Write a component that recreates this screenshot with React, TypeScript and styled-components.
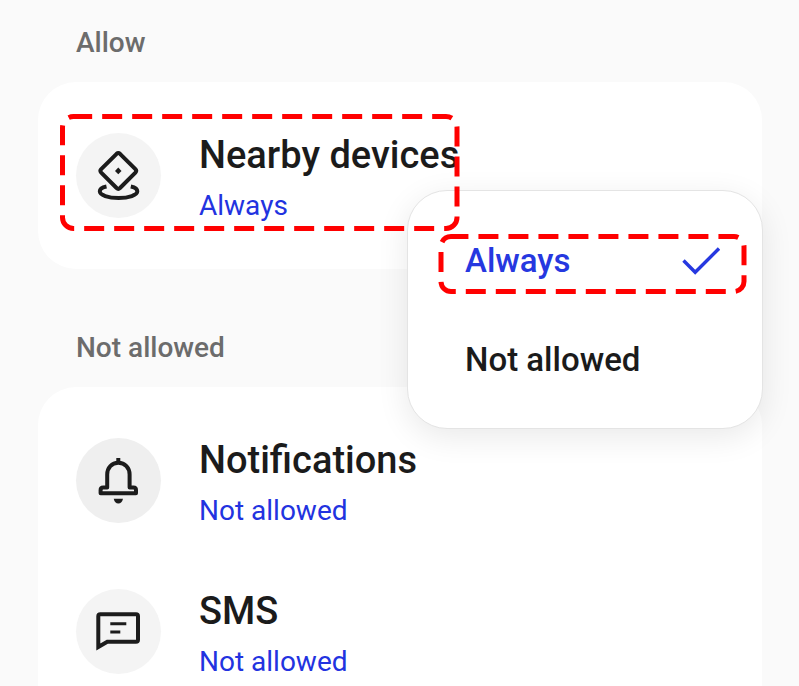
import React from "react";
import styled, { createGlobalStyle } from "styled-components";

const GlobalStyle = createGlobalStyle`
  *, *::before, *::after { box-sizing: border-box; }
  body {
    margin: 0;
    background: #fafafa;
    color: #1b1b1b;
    font-family: Roboto, "Liberation Sans", sans-serif;
  }
`;

const Screen = styled.main`
  height: 100vh;
  overflow: hidden;
  padding: 0 37px 0 38px;
`;

const Section = styled.section<{ $first?: boolean }>`
  padding-top: ${(p) => (p.$first ? 27 : 63)}px;
`;

const SectionTitle = styled.h2`
  margin: 0 0 23px;
  padding-left: 38px;
  font-size: 28px;
  line-height: 32px;
  font-weight: 500;
  color: #6c6c6c;
`;

const Card = styled.div`
  position: relative;
  padding: 18px 0;
  border-radius: 38px;
  background: #fff;
`;

const Row = styled.button`
  display: flex;
  align-items: center;
  gap: 38px;
  width: 100%;
  height: 151px;
  padding: 0 38px;
  border: 0;
  background: none;
  color: inherit;
  font: inherit;
  text-align: left;
  cursor: pointer;
`;

const IconCircle = styled.span<{ $strong?: boolean }>`
  display: grid;
  place-items: center;
  flex: none;
  width: 85px;
  height: 85px;
  border-radius: 50%;
  background: ${(p) => (p.$strong ? "#efefef" : "#f4f4f4")};
`;

const RowText = styled.span`
  display: flex;
  flex-direction: column;
  gap: 12px;
  padding-top: 2px;
  white-space: nowrap;
`;

const RowTitle = styled.span`
  font-size: 38px;
  line-height: 46px;
  font-weight: 500;
`;

const RowStatus = styled.span`
  font-size: 28px;
  line-height: 32px;
  color: #2233e0;
`;

const Menu = styled.div`
  position: absolute;
  z-index: 1;
  top: 108px;
  right: -1px;
  width: 356px;
  padding: 20px 0 19px;
  border: 1px solid #e4e4e4;
  border-radius: 40px;
  background: #fff;
  box-shadow: 0 8px 32px rgba(0, 0, 0, 0.09);
`;

const MenuItem = styled.button<{ $selected?: boolean }>`
  position: relative;
  display: flex;
  align-items: center;
  justify-content: space-between;
  width: 100%;
  height: 99px;
  padding: 0 42px 0 57px;
  border: 0;
  background: none;
  font: 500 33px/40px Roboto, "Liberation Sans", sans-serif;
  color: ${(p) => (p.$selected ? "#2638e0" : "#1b1b1b")};
  cursor: pointer;
`;

const Highlight = styled.svg<{ $top: number; $left: number }>`
  position: absolute;
  z-index: 2;
  top: ${(p) => p.$top}px;
  left: ${(p) => p.$left}px;
  overflow: visible;
  pointer-events: none;
  fill: none;
  stroke: #ff0000;
  stroke-width: 5;
  stroke-dasharray: 20 10;
`;

const Glyph = styled.svg`
  display: block;
  fill: none;
  stroke: #1c1c1c;
  stroke-width: 4;
`;

const NearbyIcon = () => (
  <Glyph width="85" height="85" viewBox="0 0 85 85" aria-hidden="true">
    <path
      d="M40.6 20.8 L25.2 36.2 Q23.6 37.9 25.2 39.6 L40.6 55 Q42.3 56.6 44 55 L59.4 39.6 Q61 37.9 59.4 36.2 L44 20.8 Q42.3 19.2 40.6 20.8 Z"
      strokeLinejoin="round"
    />
    <path d="M42.3 34.6 L45.5 37.9 L42.3 41.2 L39 37.9 Z" fill="#1c1c1c" stroke="none" />
    <path d="M30.5 53.5 C26 54.4 23.8 56.2 23.8 58.3 C23.8 62 32 65 42.6 65 C53 65 61.3 62 61.3 58.3 C61.3 56.2 59 54.4 54.8 53.5" />
  </Glyph>
);

const BellIcon = () => (
  <Glyph width="85" height="85" viewBox="0 0 85 85" aria-hidden="true">
    <path d="M42.3 20 V25" />
    <path
      d="M31.2 49.5 V36.5 C31.2 29.5 35.8 24.8 42.3 24.8 C48.9 24.8 53.6 29.5 53.6 36.5 V49.5 H57.5 Q60 49.5 60 52 V55.3 H24.6 V52 Q24.6 49.5 27.1 49.5 Z"
      strokeLinejoin="round"
    />
    <path d="M37.7 60.8 H47 Q46 65.5 42.3 65.5 Q38.8 65.5 37.7 60.8 Z" fill="#1c1c1c" stroke="none" />
  </Glyph>
);

const MessageIcon = () => (
  <Glyph width="85" height="85" viewBox="0 0 85 85" aria-hidden="true">
    <path d="M22.3 58 V27.3 Q22.3 25.2 24.4 25.2 H60 Q62 25.2 62 27.3 V50.7 Q62 52.8 60 52.8 H31.3 Z" />
    <path d="M34.3 34.8 H50.3 M34.3 43 H44.3" strokeWidth="3" />
  </Glyph>
);

const CheckIcon = () => (
  <svg width="38" height="30" viewBox="0 0 38 30" fill="none" stroke="#2638e0" strokeWidth="3.4" aria-hidden="true">
    <path d="M1.5 14.5 L13.2 26.3 L37 2.5" />
  </svg>
);

interface PermissionProps {
  icon: React.ReactNode;
  title: string;
  status: string;
  strong?: boolean;
}

const Permission = ({ icon, title, status, strong }: PermissionProps) => (
  <Row type="button">
    <IconCircle $strong={strong}>{icon}</IconCircle>
    <RowText>
      <RowTitle>{title}</RowTitle>
      <RowStatus>{status}</RowStatus>
    </RowText>
  </Row>
);

export default function App() {
  return (
    <>
      <GlobalStyle />
      <Screen>
        <Section $first>
          <SectionTitle>Allow</SectionTitle>
          <Card>
            <Permission icon={<NearbyIcon />} title="Nearby devices" status="Always" />
            <Highlight $top={32} $left={22} width="400" height="117" aria-hidden="true">
              <path d="M28.5 2.5 H13.5 A11 11 0 0 0 2.5 13.5 V103.5 A11 11 0 0 0 13.5 114.5 H386 A11 11 0 0 0 397 103.5 V13.5 A11 11 0 0 0 386 2.5 H28.5" />
            </Highlight>
            <Menu role="menu">
              <MenuItem type="button" role="menuitemradio" aria-checked="true" $selected>
                Always
                <CheckIcon />
                <Highlight $top={23} $left={30} width="309" height="60" aria-hidden="true">
                  <path d="M22 2.5 H13 A10 10 0 0 0 3 12.5 V47.5 A10 10 0 0 0 13 57.5 H296 A10 10 0 0 0 306 47.5 V12.5 A10 10 0 0 0 296 2.5 H22" />
                </Highlight>
              </MenuItem>
              <MenuItem type="button" role="menuitemradio" aria-checked="false">
                Not allowed
              </MenuItem>
            </Menu>
          </Card>
        </Section>
        <Section>
          <SectionTitle>Not allowed</SectionTitle>
          <Card>
            <Permission icon={<BellIcon />} title="Notifications" status="Not allowed" strong />
            <Permission icon={<MessageIcon />} title="SMS" status="Not allowed" />
          </Card>
        </Section>
      </Screen>
    </>
  );
}
